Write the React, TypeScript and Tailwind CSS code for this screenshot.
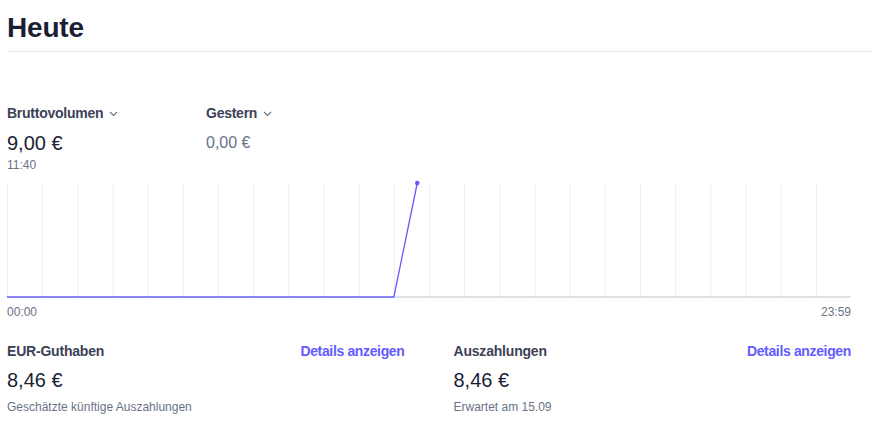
import React from 'react';

const HOURS = 24;
const CHART_W = 844;
const CHART_H = 118;
const BASE_Y = 117;

function Chevron() {
  return (
    <svg width="9" height="6" viewBox="0 0 9 6" className="ml-[6px] mt-[1px]" fill="none">
      <path d="M1 1l3.5 3.5L8 1" stroke="#697386" strokeWidth="1.1" />
    </svg>
  );
}

function VolumeChart() {
  const step = CHART_W / HOURS;
  const lines = Array.from({ length: HOURS + 1 }, (_, i) => i * step + 0.5);
  const riseX = 11 * step;
  const peakX = (11 + 40 / 60) * step;
  return (
    <svg width={CHART_W} height={CHART_H} viewBox={`0 0 ${CHART_W} ${CHART_H}`} className="block">
      {lines.map((x, i) => (
        <line key={i} x1={x} x2={x} y1={4} y2={BASE_Y} stroke="#ebeef1" strokeWidth="1" />
      ))}
      <line x1={riseX} x2={CHART_W} y1={BASE_Y} y2={BASE_Y} stroke="#c0c8d2" strokeWidth="1" />
      <polyline
        points={`0,${BASE_Y} ${riseX},${BASE_Y} ${peakX},3`}
        fill="none"
        stroke="#635bff"
        strokeWidth="1.3"
      />
      <circle cx={peakX} cy={3} r={2.3} fill="#635bff" />
    </svg>
  );
}

function BalanceCard({ title, amount, note }: { title: string; amount: string; note: string }) {
  return (
    <div className="flex-1">
      <div className="flex items-center justify-between h-[20px]">
        <span className="text-[14px] font-semibold tracking-[-0.2px] text-[#3c4257]">{title}</span>
        <a className="text-[14px] font-semibold tracking-[-0.35px] text-[#635bff] cursor-pointer">Details anzeigen</a>
      </div>
      <div className="mt-[9px] h-[20px] flex items-center text-[20px] text-[#1a1f36]">{amount}</div>
      <div className="mt-[9px] h-[16px] flex items-center text-[12px] text-[#697386]">{note}</div>
    </div>
  );
}

export default function App() {
  return (
    <div className="w-[872px] h-[436px] bg-white overflow-hidden" style={{ fontFamily: '"Liberation Sans", Arial, sans-serif' }}>
      <div className="ml-[7px] border-b border-[#e3e8ee] pt-[10px] h-[52px]">
        <h1 className="text-[28px] leading-[36px] font-bold tracking-[-0.2px] text-[#1a1f36]">Heute</h1>
      </div>

      <div className="pl-[7px] pr-[21px]">
        <div className="mt-[51px] flex">
          <div className="w-[199px]">
            <div className="flex items-center h-[20px] text-[14px] font-semibold tracking-[-0.25px] text-[#3c4257]">
              Bruttovolumen <Chevron />
            </div>
            <div className="mt-[10px] h-[20px] flex items-center text-[20px] text-[#1a1f36]">9,00 €</div>
            <div className="mt-[5px] h-[14px] flex items-center text-[12px] text-[#697386]">11:40</div>
          </div>
          <div>
            <div className="flex items-center h-[20px] text-[14px] font-semibold tracking-[-0.25px] text-[#3c4257]">
              Gestern <Chevron />
            </div>
            <div className="mt-[10px] h-[20px] flex items-center text-[16px] text-[#697386]">0,00 €</div>
          </div>
        </div>

        <div className="mt-[8px]">
          <VolumeChart />
        </div>

        <div className="mt-[7px] flex justify-between h-[14px] items-center text-[12px] text-[#697386]">
          <span>00:00</span>
          <span>23:59</span>
        </div>

        <div className="mt-[22px] flex gap-[49px]">
          <BalanceCard title="EUR-Guthaben" amount="8,46 €" note="Geschätzte künftige Auszahlungen" />
          <BalanceCard title="Auszahlungen" amount="8,46 €" note="Erwartet am 15.09" />
        </div>
      </div>
    </div>
  );
}
